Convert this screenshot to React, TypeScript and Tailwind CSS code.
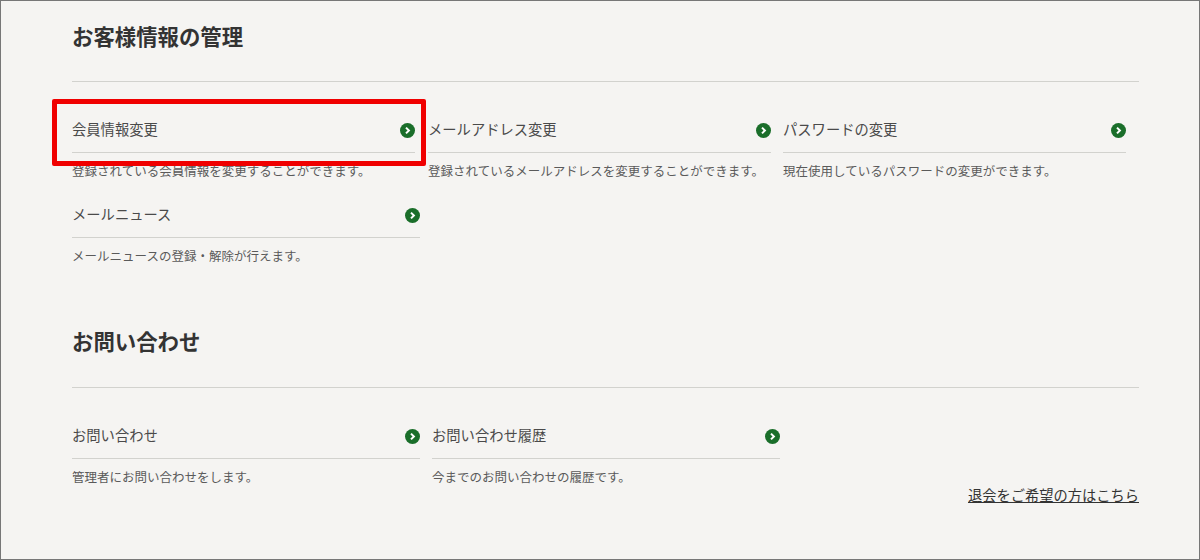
const FONT = "font-['Noto_Sans_CJK_JP','Noto_Sans',sans-serif]";

type MenuItemProps = {
  title: string;
  text: string;
  lineClass: string;
};

function ArrowIcon() {
  return (
    <svg width="15" height="15" viewBox="0 0 15 15" className="shrink-0">
      <circle cx="7.5" cy="7.5" r="7.5" fill="#1a6e2a" />
      <path d="M6 4.6 8.9 7.5 6 10.4" fill="none" stroke="#fff" strokeWidth="2" />
    </svg>
  );
}

function MenuItem({ title, text, lineClass }: MenuItemProps) {
  return (
    <div className={lineClass}>
      <div className="flex h-[44px] items-center justify-between border-b border-[#d2d2ce] pb-[1px]">
        <span className="mb-[2px] text-[14.3px] leading-[20px] text-[#4a4a4a]">{title}</span>
        <ArrowIcon />
      </div>
      <p className="mt-[9px] text-[12.5px] leading-[18px] whitespace-nowrap text-[#5a5a5a]">{text}</p>
    </div>
  );
}

export default function App() {
  return (
    <div className={`relative h-[560px] w-[1200px] overflow-hidden border border-[#777] bg-[#f5f4f2] ${FONT}`}>
      <div className="pl-[71px] pr-[60px] pt-[19px]">
        <h2 className="text-[21.4px] leading-[32px] font-bold text-[#333]">お客様情報の管理</h2>
        <div className="mt-[29px] border-t border-[#d2d2ce]" />

        <div className="mt-[27px] flex gap-[12px]">
          <MenuItem
            lineClass="mr-[1px] w-[343px]"
            title="会員情報変更"
            text="登録されている会員情報を変更することができます。"
          />
          <MenuItem
            lineClass="w-[343px]"
            title="メールアドレス変更"
            text="登録されているメールアドレスを変更することができます。"
          />
          <MenuItem
            lineClass="w-[343px]"
            title="パスワードの変更"
            text="現在使用しているパスワードの変更ができます。"
          />
        </div>
        <div className="mt-[14px] flex">
          <MenuItem
            lineClass="w-[348px]"
            title="メールニュース"
            text="メールニュースの登録・解除が行えます。"
          />
        </div>

        <h2 className="mt-[60px] text-[21.4px] leading-[32px] font-bold text-[#333]">お問い合わせ</h2>
        <div className="mt-[30px] border-t border-[#d2d2ce]" />

        <div className="mt-[27px] flex gap-[12px]">
          <MenuItem
            lineClass="w-[348px]"
            title="お問い合わせ"
            text="管理者にお問い合わせをします。"
          />
          <MenuItem
            lineClass="w-[348px]"
            title="お問い合わせ履歴"
            text="今までのお問い合わせの履歴です。"
          />
        </div>
        <div className="-mt-[1px] flex justify-end">
          <a className="text-[14.25px] leading-[20px] text-[#333] underline">退会をご希望の方はこちら</a>
        </div>
      </div>

      <div className="absolute left-[51px] top-[98px] h-[67px] w-[374px] rounded-[2px] border-[5px] border-[#f00000]" />
    </div>
  );
}
